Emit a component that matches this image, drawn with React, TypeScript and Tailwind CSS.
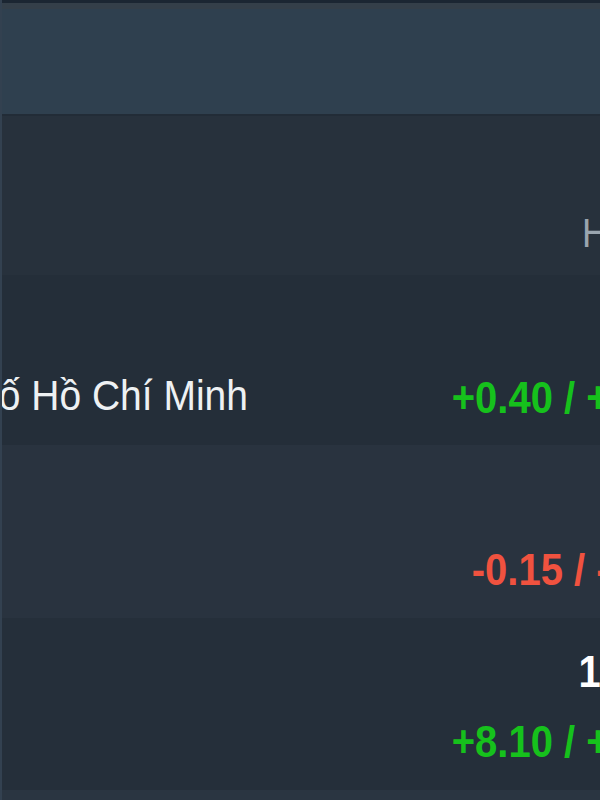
const rows = [
  { name: 'Thành phố Hồ Chí Minh', price: '26.50', change: '+0.40 / +1.53%', up: true, bg: 'bg-[#242e39]', h: 'h-[170px]' },
  { name: '', price: '42.10', change: '-0.15 / -0.35%', up: false, bg: 'bg-[#29333f]', h: 'h-[173px]' },
  { name: '', price: '1271.52', change: '+8.10 / +0.64%', up: true, bg: 'bg-[#252f3a]', h: 'h-[172px]' },
];

export default function App() {
  return (
    <div className="w-[600px] h-[800px] overflow-hidden bg-[#2a3541] border-l-2 border-[#334150] font-['Liberation_Sans',Arial,sans-serif]">
      <div className="h-[3px] bg-[#1b2632]" />
      <div className="h-[113px] bg-[#2f404f] border-t-[6px] border-[#343f49] border-b-2 border-b-[#222c37]" />

      <div className="w-[1000px]">
        <div className="flex h-[159px] bg-[#27313c]">
          <div className="w-[446px] shrink-0" />
          <div className="w-[278px] shrink-0 text-right text-[36px] text-[#9aa5af] whitespace-nowrap pt-[94px] leading-none scale-y-115">Hôm nay</div>
        </div>

        {rows.map((r, i) => (
          <div key={i} className={`flex items-center ${r.bg} ${r.h}`}>
            <div className="w-[446px] shrink-0 flex justify-end pr-[200px] pt-[70px]">
              <span className="text-[39px] leading-none text-[#eef1f3] whitespace-nowrap scale-y-110">{r.name}</span>
            </div>
            <div className="w-[275px] shrink-0 flex flex-col items-end gap-[10px] font-bold text-[40px] leading-[60px] whitespace-nowrap pt-[4px]">
              <span className="text-white scale-y-112">{r.price}</span>
              <span className={`scale-y-112 ${r.up ? 'text-[#16c11c]' : 'text-[#f0523f]'}`}>{r.change}</span>
            </div>
          </div>
        ))}
      </div>
    </div>
  );
}
